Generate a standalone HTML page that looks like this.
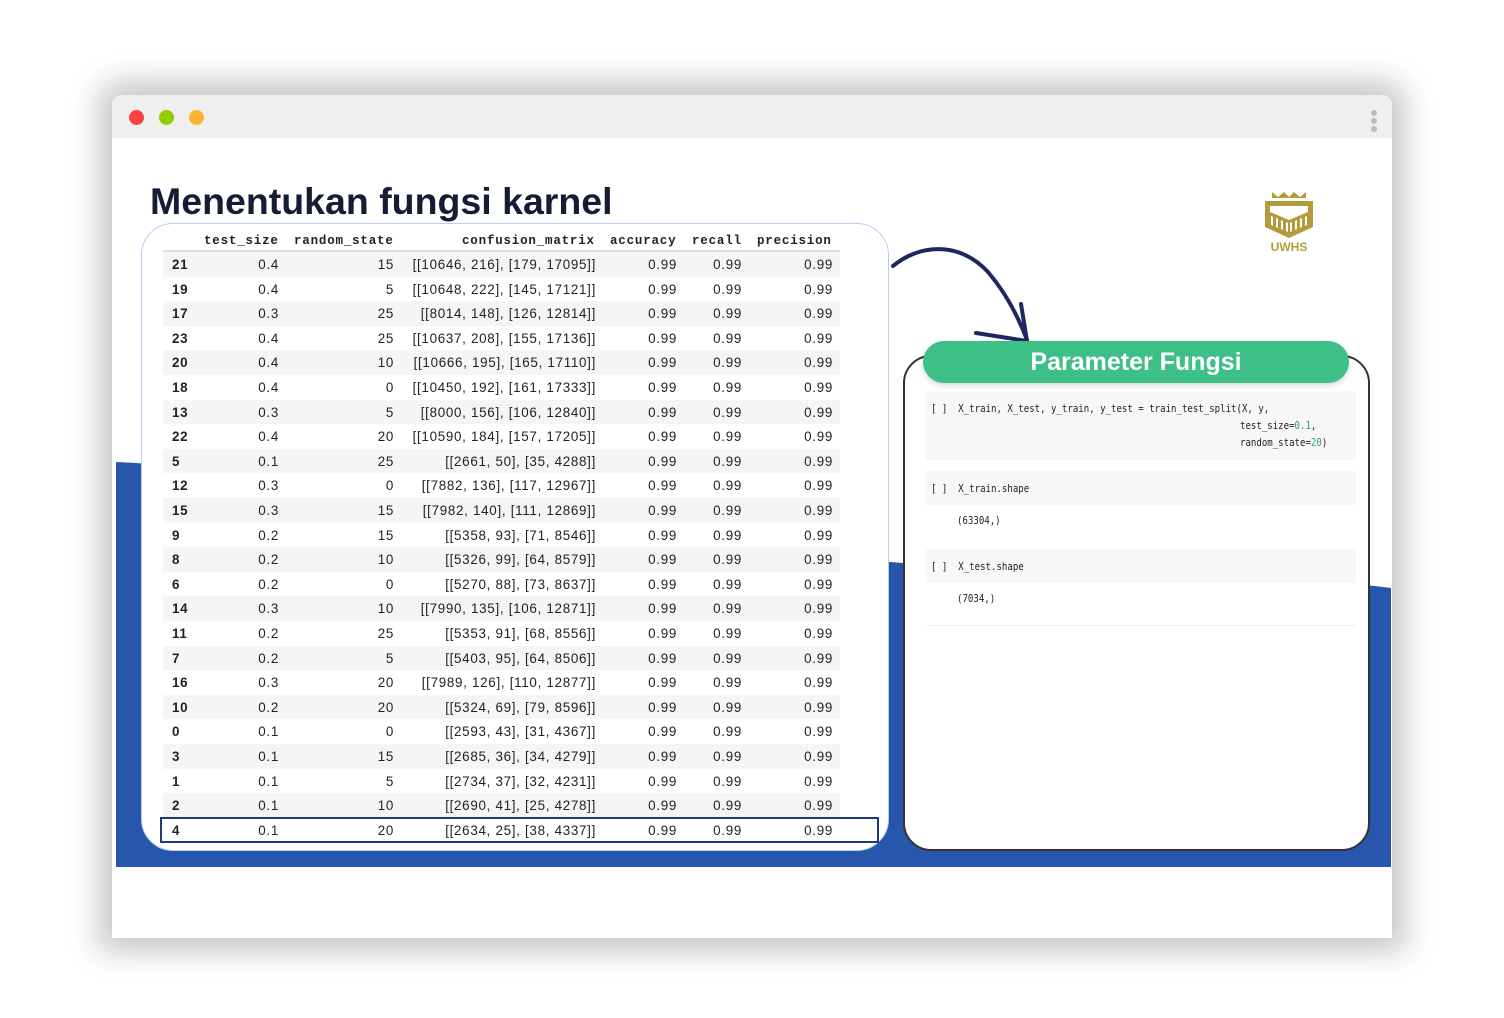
<!DOCTYPE html>
<html><head><meta charset="utf-8"><style>
*{margin:0;padding:0;box-sizing:border-box}
body{width:1504px;height:1018px;background:#fff;position:relative;overflow:hidden;font-family:"Liberation Sans",sans-serif}
.win{position:absolute;left:112px;top:95px;width:1280px;height:843px;background:#fff;border-radius:10px 10px 0 0;box-shadow:0 0 30px 14px rgba(0,0,0,0.22);overflow:hidden}
.bar{position:absolute;left:0;top:0;width:1280px;height:43px;background:#efefef}
.dot{position:absolute;top:15px;width:15px;height:15px;border-radius:50%}
.ab{position:absolute}
.title{position:absolute;left:150px;top:180px;font-size:37.5px;font-weight:bold;color:#141c36;letter-spacing:0px}
.card{position:absolute;left:141px;top:223px;width:748px;height:628px;background:#fff;border:1px solid #b8cff0;border-radius:32px}
.row{position:absolute;left:163px;width:677px;height:24.6px;font-size:13.4px;color:#222;letter-spacing:0.7px}
.row span{position:absolute;top:5px}
.r{text-align:right}
.hd{position:absolute;top:234px;font-family:"Liberation Mono",monospace;font-weight:bold;font-size:12.5px;color:#222;letter-spacing:0.8px}
.rc{position:absolute;left:903px;top:355px;width:467px;height:496px;background:#fff;border:2px solid #333;border-radius:28px}
.pill{position:absolute;left:923px;top:341px;width:426px;height:42px;background:#3dbf88;border-radius:21px;color:#fff;font-weight:bold;font-size:25px;text-align:center;line-height:42px;box-shadow:0 3px 6px rgba(0,0,0,0.15)}
.cell{position:absolute;left:926px;width:430px;background:#f7f7f7}
.code{position:absolute;font-family:"DejaVu Sans Mono","Liberation Mono",monospace;font-size:10.3px;color:#222;transform:scaleX(0.88);transform-origin:left}
</style></head><body>
<div class="win">
<div class="bar"></div>
<div class="dot" style="left:17px;background:#fc4141"></div>
<div class="dot" style="left:47px;background:#94cc00"></div>
<div class="dot" style="left:77px;background:#fdb42e"></div>
<div class="ab" style="left:1259px;top:15px;width:6px;height:6px;border-radius:50%;background:#bbb"></div>
<div class="ab" style="left:1259px;top:23px;width:6px;height:6px;border-radius:50%;background:#bbb"></div>
<div class="ab" style="left:1259px;top:31px;width:6px;height:6px;border-radius:50%;background:#bbb"></div>
</div>
<svg class="ab" style="left:0;top:0" width="1504" height="1018">
<path d="M116 462 C300 470 700 560 1000 568 C1200 572 1330 580 1391 588 L1391 867 L116 867 Z" fill="#2856ad"/>
</svg>
<div class="title">Menentukan fungsi karnel</div>
<div class="card"></div>
<div class="hd" style="left:204px">test_size</div>
<div class="hd" style="left:294px">random_state</div>
<div class="hd" style="left:462px">confusion_matrix</div>
<div class="hd" style="left:610px">accuracy</div>
<div class="hd" style="left:692px">recall</div>
<div class="hd" style="left:757px">precision</div>
<div class="ab" style="left:163px;top:250px;width:677px;height:2px;background:#ddd"></div>
<div id="rows"></div>
<script>
var d=[["21","0.4","15","[[10646, 216], [179, 17095]]"],["19","0.4","5","[[10648, 222], [145, 17121]]"],["17","0.3","25","[[8014, 148], [126, 12814]]"],["23","0.4","25","[[10637, 208], [155, 17136]]"],["20","0.4","10","[[10666, 195], [165, 17110]]"],["18","0.4","0","[[10450, 192], [161, 17333]]"],["13","0.3","5","[[8000, 156], [106, 12840]]"],["22","0.4","20","[[10590, 184], [157, 17205]]"],["5","0.1","25","[[2661, 50], [35, 4288]]"],["12","0.3","0","[[7882, 136], [117, 12967]]"],["15","0.3","15","[[7982, 140], [111, 12869]]"],["9","0.2","15","[[5358, 93], [71, 8546]]"],["8","0.2","10","[[5326, 99], [64, 8579]]"],["6","0.2","0","[[5270, 88], [73, 8637]]"],["14","0.3","10","[[7990, 135], [106, 12871]]"],["11","0.2","25","[[5353, 91], [68, 8556]]"],["7","0.2","5","[[5403, 95], [64, 8506]]"],["16","0.3","20","[[7989, 126], [110, 12877]]"],["10","0.2","20","[[5324, 69], [79, 8596]]"],["0","0.1","0","[[2593, 43], [31, 4367]]"],["3","0.1","15","[[2685, 36], [34, 4279]]"],["1","0.1","5","[[2734, 37], [32, 4231]]"],["2","0.1","10","[[2690, 41], [25, 4278]]"],["4","0.1","20","[[2634, 25], [38, 4337]]"]];
var h="";
for(var i=0;i<d.length;i++){var t=252+i*24.6;var bg=(i%2==0&&i<23)?"#f5f5f5":"#fff";
h+='<div class="row" style="top:'+t+'px;background:'+bg+'"><span style="left:9px;font-weight:bold">'+d[i][0]+'</span><span class="r" style="right:561px">'+d[i][1]+'</span><span class="r" style="right:446px">'+d[i][2]+'</span><span class="r" style="right:244px">'+d[i][3]+'</span><span class="r" style="right:163px">0.99</span><span class="r" style="right:98px">0.99</span><span class="r" style="right:7px">0.99</span></div>';}
document.getElementById("rows").innerHTML=h;
</script>
<div class="ab" style="left:160px;top:817px;width:719px;height:26px;border:2px solid #1e3a78"></div>
<div class="rc"></div>
<svg class="ab" style="left:0;top:0" width="1504" height="1018">
<path d="M893 266 C918 245 958 240 988 272 C1005 292 1018 316 1027 340" fill="none" stroke="#1e2760" stroke-width="4" stroke-linecap="round"/>
<path d="M1021 304 L1027 341 L976 333" fill="none" stroke="#1e2760" stroke-width="4" stroke-linecap="round" stroke-linejoin="round"/>
</svg>
<div class="pill">Parameter Fungsi</div>
<div class="cell" style="top:391px;height:69px"></div>
<div class="code" style="left:931px;top:403px">[ ]&nbsp;&nbsp;X_train, X_test, y_train, y_test = train_test_split(X, y,</div>
<div class="code" style="left:1240px;top:420px">test_size=<span style="color:#2a9d74">0.1</span>,</div>
<div class="code" style="left:1240px;top:437px">random_state=<span style="color:#2a9d74">20</span>)</div>
<div class="cell" style="top:471px;height:34px"></div>
<div class="code" style="left:931px;top:483px">[ ]&nbsp;&nbsp;X_train.shape</div>
<div class="code" style="left:957px;top:515px">(63304,)</div>
<div class="cell" style="top:549px;height:34px"></div>
<div class="code" style="left:931px;top:561px">[ ]&nbsp;&nbsp;X_test.shape</div>
<div class="code" style="left:957px;top:593px">(7034,)</div>
<div class="ab" style="left:926px;top:625px;width:430px;height:1px;background:#eee"></div>
<svg class="ab" style="left:1262px;top:190px" width="54" height="64">
<path d="M10 2 L16 7 L22 2 L27 7 L32 2 L38 7 L44 2 L44 8 L10 8 Z" fill="#b39b3b"/>
<path d="M3 11 L51 11 L51 37 L27 48 L3 37 Z" fill="#b39b3b"/>
<path d="M8 16 L46 16 L46 22 L27 30 L8 22 Z" fill="#fff"/>
<path d="M9 26 L11 27 L11 36 L9 35 Z M14 28 L16 29 L16 38 L14 37 Z M19 30 L21 31 L21 40 L19 39 Z M24 32 L26 33 L26 42 L24 41 Z M28 33 L30 32 L30 41 L28 42 Z M33 31 L35 30 L35 39 L33 40 Z M38 29 L40 28 L40 37 L38 38 Z M43 27 L45 26 L45 35 L43 36 Z" fill="#fff"/>
<text x="27" y="61" text-anchor="middle" font-family="Liberation Sans" font-weight="bold" font-size="12" fill="#b39b3b">UWHS</text>
</svg>
</body></html>
